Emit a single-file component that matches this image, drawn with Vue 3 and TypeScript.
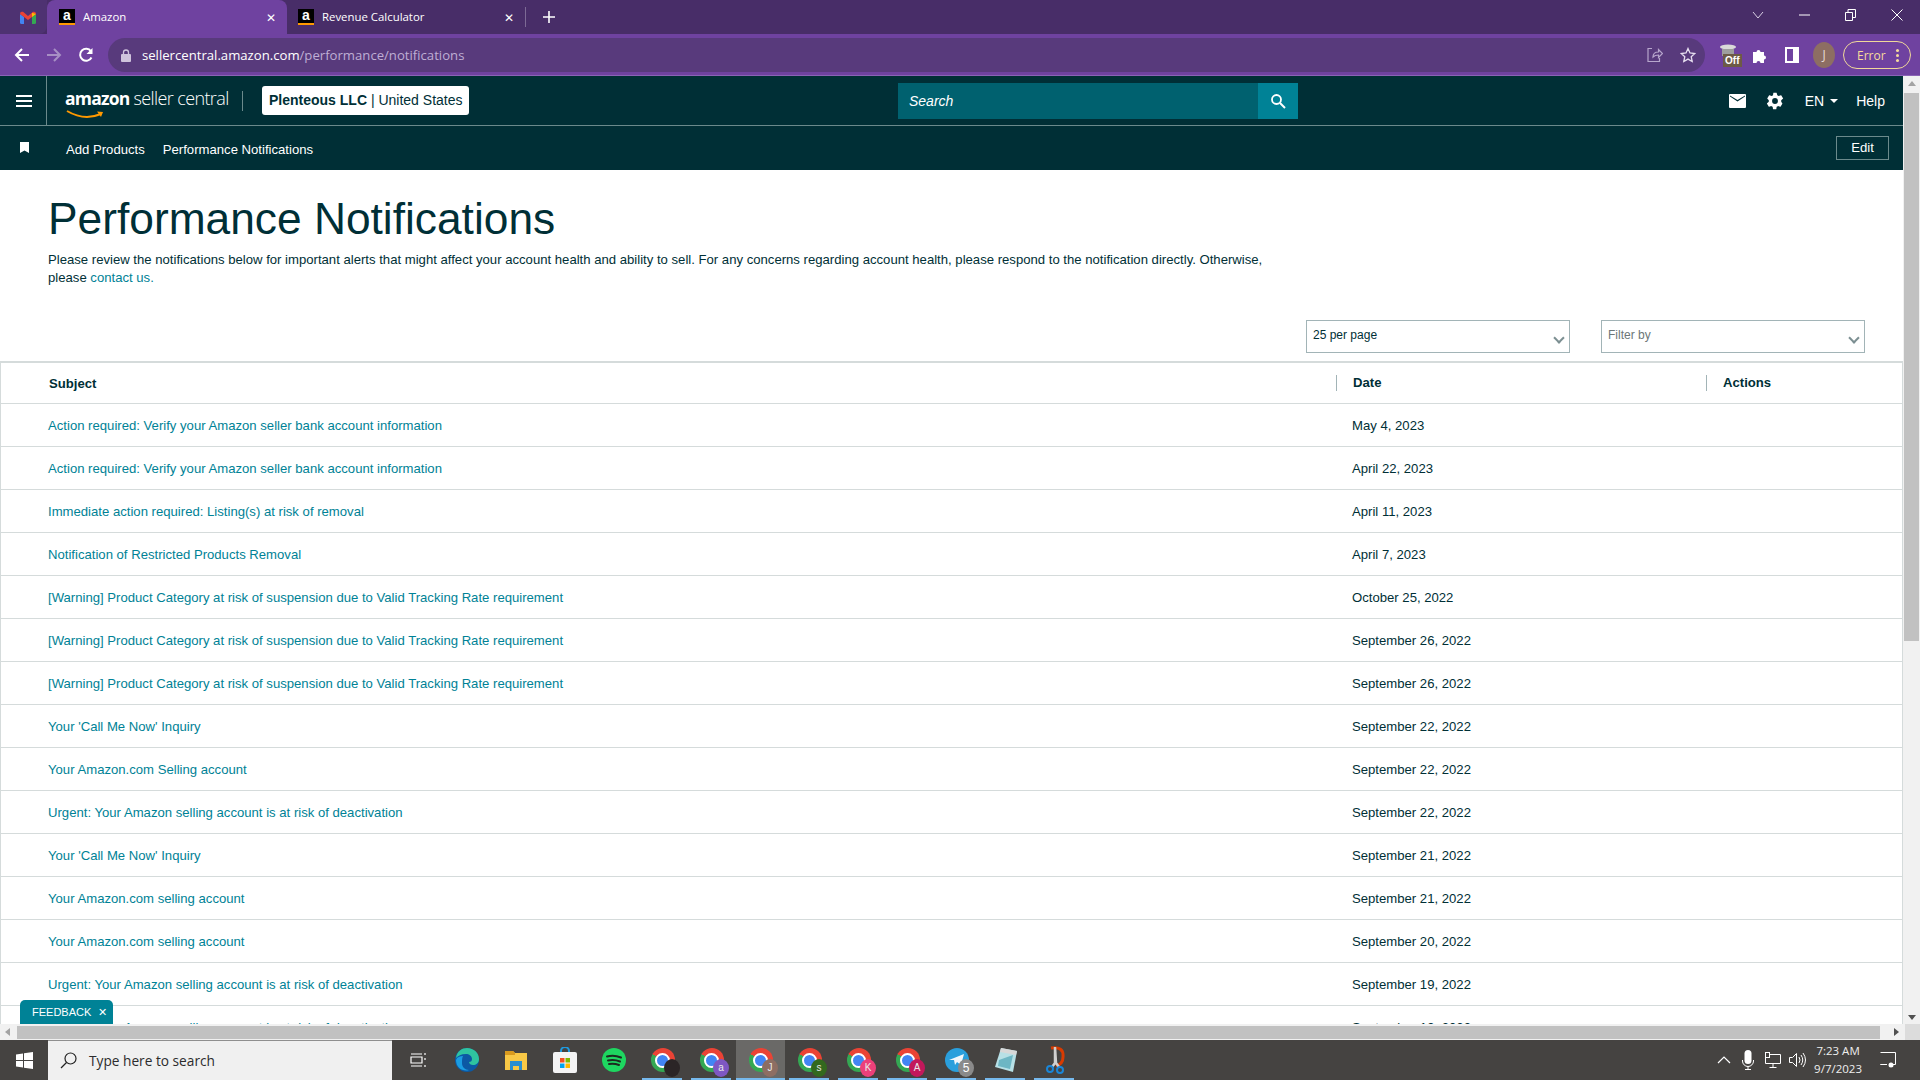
<script setup lang="ts">
interface Row {
  subject: string
  date: string
}

const rows: Row[] = [
  { subject: "Action required: Verify your Amazon seller bank account information", date: "May 4, 2023" },
  { subject: "Action required: Verify your Amazon seller bank account information", date: "April 22, 2023" },
  { subject: "Immediate action required: Listing(s) at risk of removal", date: "April 11, 2023" },
  { subject: "Notification of Restricted Products Removal", date: "April 7, 2023" },
  { subject: "[Warning] Product Category at risk of suspension due to Valid Tracking Rate requirement", date: "October 25, 2022" },
  { subject: "[Warning] Product Category at risk of suspension due to Valid Tracking Rate requirement", date: "September 26, 2022" },
  { subject: "[Warning] Product Category at risk of suspension due to Valid Tracking Rate requirement", date: "September 26, 2022" },
  { subject: "Your 'Call Me Now' Inquiry", date: "September 22, 2022" },
  { subject: "Your Amazon.com Selling account", date: "September 22, 2022" },
  { subject: "Urgent: Your Amazon selling account is at risk of deactivation", date: "September 22, 2022" },
  { subject: "Your 'Call Me Now' Inquiry", date: "September 21, 2022" },
  { subject: "Your Amazon.com selling account", date: "September 21, 2022" },
  { subject: "Your Amazon.com selling account", date: "September 20, 2022" },
  { subject: "Urgent: Your Amazon selling account is at risk of deactivation", date: "September 19, 2022" },
  { subject: "Urgent: Your Amazon selling account is at risk of deactivation", date: "September 19, 2022" },
]

const chromes = [
  { letter: "", color: "#2b2526", active: false },
  { letter: "a", color: "#7e57c2", active: false },
  { letter: "J", color: "#8d6e63", active: true },
  { letter: "s", color: "#33691e", active: false },
  { letter: "K", color: "#ec407a", active: false },
  { letter: "A", color: "#c2185b", active: false },
]
</script>

<template>
  <div class="screen">
    <div class="tabstrip">
      <div class="gmail-tab">
        <svg width="16" height="13" viewBox="0 0 16 13">
          <path d="M0 3v8.500q0 1.500 1.500 1.500H4V6z" fill="#4285f4" />
          <path d="M16 3v8.500q0 1.500-1.500 1.500H12V6z" fill="#34a853" />
          <path d="M0 3q0-3 3-2.200L8 5l5-4.200q3-.8 3 2.200l-4 3-4 3-4-3z" fill="#ea4335" />
          <path d="M12 1.800 16 3l-4 3z" fill="#fbbc04" />
        </svg>
      </div>
      <div class="tab active">
        <span class="favicon">a</span>
        <span class="tab-title">Amazon</span>
        <span class="tab-close">✕</span>
      </div>
      <div class="tab">
        <span class="favicon">a</span>
        <span class="tab-title">Revenue Calculator</span>
        <span class="tab-close">✕</span>
      </div>
      <div class="tab-sep"></div>
      <svg class="new-tab" width="12" height="12" viewBox="0 0 12 12">
        <path d="M6 0v12M0 6h12" stroke="#fff" stroke-width="1.600" />
      </svg>
      <div class="win-controls">
        <svg width="12" height="8" viewBox="0 0 12 8"><path d="M1 1l5 6 5-6" fill="none" stroke="#d8d0e4" /></svg>
        <svg width="11" height="2" viewBox="0 0 11 2"><path d="M0 1h11" stroke="#fff" /></svg>
        <svg width="11" height="12" viewBox="0 0 11 12"><path d="M.5 3.500h7v8h-7zM3 3.500V.500h7.500v8H7.500" fill="none" stroke="#fff" /></svg>
        <svg width="12" height="12" viewBox="0 0 12 12"><path d="M.5.500l11 11M11.500.500l-11 11" stroke="#fff" /></svg>
      </div>
    </div>

    <div class="toolbar">
      <svg class="nav-ic" width="16" height="16" viewBox="0 0 16 16"><path d="M15 8H2M8 2 2 8l6 6" fill="none" stroke="#fff" stroke-width="2" /></svg>
      <svg class="nav-ic" width="16" height="16" viewBox="0 0 16 16"><path d="M1 8h13M8 2l6 6-6 6" fill="none" stroke="#a78fc4" stroke-width="2" /></svg>
      <svg class="nav-ic" width="16" height="16" viewBox="0 0 16 16"><path d="M13.500 10.500A6 6 0 1 1 13 4.300" fill="none" stroke="#fff" stroke-width="2" /><path d="M14.500 1v6h-6z" fill="#fff" /></svg>
      <div class="omnibox">
        <svg width="10" height="13" viewBox="0 0 10 13"><path d="M2.500 5V3.500a2.500 2.500 0 0 1 5 0V5" fill="none" stroke="#cfc3dc" stroke-width="1.300" /><rect y="5" width="10" height="8" rx="1" fill="#cfc3dc" /></svg>
        <span class="url"><b>sellercentral.amazon.com</b>/performance/notifications</span>
        <svg class="omni-share" width="16" height="16" viewBox="0 0 16 16"><path d="M5 1.500H1v13h11.500V11M6 10q0-5 5.500-5V2.500L15.500 6.500l-4 4V8Q8 8 6 10z" fill="none" stroke="#b7a6cc" stroke-width="1.200" /></svg>
        <svg width="16" height="16" viewBox="0 0 16 16"><path d="M8 1.500l2 4.500 4.800.5-3.600 3.200 1 4.800L8 12.100l-4.200 2.400 1-4.800L1.200 6.500 6 6z" fill="none" stroke="#e6deef" stroke-width="1.300" /></svg>
      </div>
      <div class="ext">
        <svg width="18" height="14" viewBox="0 0 18 14"><ellipse cx="9" cy="3" rx="8" ry="2.500" fill="#d9d9d9" /><path d="M3 5v7h12V5z" fill="#9e9e9e" /></svg>
        <span class="ext-off">Off</span>
      </div>
      <svg class="tool-ic puzzle" width="16" height="16" viewBox="0 0 16 16"><path d="M1 5h3.500a2 2 0 1 1 4 0H12v3.500a2 2 0 1 1 0 4V16H8.500a2 2 0 1 0-4 0H1z" fill="#fff" /></svg>
      <svg class="tool-ic panel" width="14" height="16" viewBox="0 0 14 16"><path d="M0 0h14v16H0zM2 2v12h6V2z" fill="#fff" fill-rule="evenodd" /></svg>
      <span class="avatar">J</span>
      <div class="error-pill"><span>Error</span><i class="dots"></i></div>
    </div>

    <div class="body">
      <div class="page">
        <header class="sc-top">
          <div class="burger">
            <svg width="16" height="12" viewBox="0 0 16 12"><path d="M0 1h16M0 6h16M0 11h16" stroke="#fff" stroke-width="2" /></svg>
          </div>
          <div class="logo">
            <span class="logo-amazon">amazon</span>
            <span class="logo-seller">seller central</span>
            <svg class="logo-smile" width="42" height="10" viewBox="0 0 42 10"><path d="M1 1q17 10 34 3" fill="none" stroke="#f90" stroke-width="2" /><path d="M31 1.500l6 .5-2 5z" fill="#f90" /></svg>
          </div>
          <div class="logo-sep"></div>
          <div class="account"><b>Plenteous LLC</b> | United States</div>
          <div class="search">
            <span class="search-input">Search</span>
            <span class="search-btn">
              <svg width="16" height="16" viewBox="0 0 16 16"><circle cx="6.500" cy="6.500" r="4.500" fill="none" stroke="#fff" stroke-width="1.800" /><path d="M10 10l5 5" stroke="#fff" stroke-width="2" /></svg>
            </span>
          </div>
          <div class="top-right">
            <svg width="17" height="14" viewBox="0 0 17 14"><path d="M1 0h15a1 1 0 0 1 1 1v12a1 1 0 0 1-1 1H1a1 1 0 0 1-1-1V1a1 1 0 0 1 1-1zm0 2.500 7.500 5 7.500-5v-1L8.500 6 1 1.500z" fill="#fff" fill-rule="evenodd" /></svg>
            <svg class="gear" width="20" height="20" viewBox="0 0 24 24"><path d="M19.400 13c.1-.3.100-.7.100-1s0-.7-.1-1l2.100-1.600c.2-.2.200-.4.100-.6l-2-3.500c-.1-.2-.4-.3-.6-.2l-2.500 1c-.5-.4-1.100-.7-1.700-1L14 2.400c0-.2-.2-.4-.5-.4h-3c-.3 0-.5.200-.5.400l-.4 2.700c-.6.300-1.200.6-1.700 1l-2.500-1c-.2-.1-.5 0-.6.200l-2 3.500c-.1.200-.1.400.1.600L4.600 11c-.1.300-.1.700-.1 1s0 .7.100 1l-2.100 1.600c-.2.200-.2.400-.1.600l2 3.500c.1.200.4.300.6.200l2.500-1c.5.400 1.100.7 1.700 1l.4 2.700c0 .2.200.4.500.4h3c.3 0 .5-.2.500-.4l.4-2.700c.6-.3 1.200-.6 1.700-1l2.500 1c.2.100.5 0 .6-.2l2-3.500c.1-.2.100-.4-.1-.6zM12 15.500a3.500 3.500 0 1 1 0-7 3.500 3.500 0 0 1 0 7z" fill="#fff" /></svg>
            <span class="lang">EN<i class="lang-caret"></i></span>
            <span class="help">Help</span>
          </div>
        </header>

        <nav class="sc-nav">
          <svg class="bookmark" width="9" height="11" viewBox="0 0 9 11"><path d="M0 0h9v11L4.500 8.500 0 11z" fill="#fff" /></svg>
          <span class="nav-link first">Add Products</span>
          <span class="nav-link">Performance Notifications</span>
          <span class="edit">Edit</span>
        </nav>

        <main class="content">
          <h1>Performance Notifications</h1>
          <p class="intro">
            Please review the notifications below for important alerts that might affect your account health and ability to sell. For any concerns regarding account health, please respond to the notification directly. Otherwise, please <a>contact us.</a>
          </p>
          <div class="filters">
            <div class="select"><span>25 per page</span><i class="chev"></i></div>
            <div class="select placeholder"><span>Filter by</span><i class="chev"></i></div>
          </div>
          <div class="table">
            <div class="tr th">
              <div class="c1">Subject</div>
              <div class="c2">Date</div>
              <div class="c3">Actions</div>
            </div>
            <div v-for="(r, i) in rows" :key="i" class="tr">
              <div class="c1"><a>{{ r.subject }}</a></div>
              <div class="c2">{{ r.date }}</div>
              <div class="c3"></div>
            </div>
          </div>
          <div class="feedback">FEEDBACK<span>✕</span></div>
        </main>
      </div>

      <div class="vscroll">
        <i class="arrow up"></i>
        <div class="vthumb"></div>
        <i class="arrow down"></i>
      </div>
    </div>

    <div class="hscroll">
      <i class="arrow left"></i>
      <div class="hthumb"></div>
      <i class="arrow right"></i>
      <div class="corner"></div>
    </div>

    <footer class="taskbar">
      <div class="start">
        <svg width="17" height="17" viewBox="0 0 17 17"><path d="M0 2.400 7 1.400V8H0zM8 1.200 17 0v8H8zM0 9h7v6.600l-7-1zM8 9h9v8l-9-1.200z" fill="#fff" /></svg>
      </div>
      <div class="tb-search">
        <svg width="17" height="17" viewBox="0 0 17 17"><circle cx="10.500" cy="6.500" r="5.500" fill="none" stroke="#222" stroke-width="1.200" /><path d="M6.500 10.500 1 16" stroke="#222" stroke-width="1.300" /></svg>
        <span>Type here to search</span>
      </div>
      <div class="tb-apps">
        <div class="tb-app">
          <svg width="16" height="16" viewBox="0 0 16 16"><path d="M1 2h11M1 14h11M1 5h11v6H1zM15 1v2M15 6v2M15 13v2" fill="none" stroke="#fff" stroke-width="1.200" /></svg>
        </div>
        <div class="tb-app">
          <svg width="24" height="24" viewBox="0 0 24 24">
            <circle cx="12" cy="12" r="12" fill="#0c59a4" />
            <path d="M1 10C2 3 7 0 12 0c7 0 12 5 12 11 0 4-3 6-6 6-2 0-4-1-4-3 2 0 3-1 3-3 0-3-3-5-6-5-5 0-8 2-10 4z" fill="#2fc4a0" />
            <path d="M7 15c0 4 3 7 7 7-6 2-13-2-13-10 1-3 4-4 7-4-1 2-1 4-1 7z" fill="#1b9de2" />
          </svg>
        </div>
        <div class="tb-app">
          <svg width="22" height="20" viewBox="0 0 22 20">
            <path d="M0 1h8l2 2h12v17H0z" fill="#f8c846" />
            <path d="M0 1h8l2 2v2H0z" fill="#d99a1e" />
            <path d="M5 11h12v9h-3v-4H8v4H5z" fill="#2a8ed0" />
          </svg>
        </div>
        <div class="tb-app">
          <svg width="24" height="26" viewBox="0 0 24 26">
            <path d="M8 6V4a4 4 0 0 1 8 0v2" fill="none" stroke="#1e9be0" stroke-width="2" />
            <rect y="5" width="24" height="21" rx="2" fill="#f4f4f4" />
            <rect x="7" y="11" width="4.500" height="4.500" fill="#f25022" />
            <rect x="12.500" y="11" width="4.500" height="4.500" fill="#7fba00" />
            <rect x="7" y="16.500" width="4.500" height="4.500" fill="#00a4ef" />
            <rect x="12.500" y="16.500" width="4.500" height="4.500" fill="#ffb900" />
          </svg>
        </div>
        <div class="tb-app">
          <svg width="24" height="24" viewBox="0 0 24 24">
            <circle cx="12" cy="12" r="12" fill="#1ed760" />
            <path d="M5 8.500q7-2 14 1M6 12.500q6-1.500 12 1M7 16q5-1 10 1" fill="none" stroke="#1c2b20" stroke-width="2" stroke-linecap="round" />
          </svg>
        </div>
        <div v-for="c in chromes" :key="c.color" class="tb-app open" :class="{ focused: c.active }">
          <div class="chrome"><i></i></div>
          <span class="chrome-badge" :style="{ background: c.color }">{{ c.letter }}</span>
        </div>
        <div class="tb-app open">
          <svg width="24" height="24" viewBox="0 0 24 24">
            <circle cx="12" cy="12" r="12" fill="#2a9fdc" />
            <path d="M4 12 19 6l-3 11-4-3-2 3-1-5z" fill="#f2f7fb" />
          </svg>
          <span class="chrome-badge tg">5</span>
        </div>
        <div class="tb-app open">
          <svg width="24" height="26" viewBox="0 0 24 26">
            <path d="M7 1l16 3-4 21-18-5z" fill="#b7e0e6" />
            <path d="M7 1l16 3-1 4L6 5z" fill="#d8d8d8" />
            <path d="M5 13l14-5-3 14-12-3z" fill="#6db6c4" />
          </svg>
        </div>
        <div class="tb-app open">
          <svg width="20" height="28" viewBox="0 0 20 28">
            <path d="M6 2q13-2 12 9 0 7-7 9" fill="none" stroke="#d83b01" stroke-width="3" />
            <path d="M10 1v16l-3 4M10 1l1 16 3 4" fill="none" stroke="#d0d0d0" stroke-width="2.500" />
            <circle cx="5" cy="23" r="3" fill="none" stroke="#1a86d8" stroke-width="2" />
            <circle cx="15" cy="24" r="3" fill="none" stroke="#1a86d8" stroke-width="2" />
          </svg>
        </div>
      </div>
      <div class="tray">
        <svg width="14" height="8" viewBox="0 0 14 8"><path d="M1 7l6-6 6 6" fill="none" stroke="#fff" stroke-width="1.200" /></svg>
        <svg class="mic" width="12" height="20" viewBox="0 0 12 20"><rect x="2.500" width="7" height="14" rx="3.500" fill="#fff" /><path d="M.5 10v1a5.500 5.500 0 0 0 11 0v-1M6 16.500V19M3 19.500h6" fill="none" stroke="#fff" /></svg>
        <svg class="net" width="16" height="16" viewBox="0 0 16 16"><path d="M4 2.500h11.500v9H.5V6M8 11.500v3.500M4.500 15.500h7" fill="none" stroke="#fff" /><rect x=".5" y=".5" width="4" height="5" fill="#454341" stroke="#fff" /></svg>
        <svg width="17" height="16" viewBox="0 0 17 16"><path d="M.5 5.500h3l4-4v13l-4-4h-3zM10 5q2 3 0 6M12 3q3.500 5 0 10M14 1q5 7 0 14" fill="none" stroke="#fff" /></svg>
        <div class="clock"><span>7:23 AM</span><span>9/7/2023</span></div>
        <svg class="notif" width="16" height="16" viewBox="0 0 16 16"><path d="M.5.500h15v12h-4M7 12.500H.5z" fill="none" stroke="#fff" /><circle cx="11" cy="13" r="2.500" fill="#fff" /></svg>
      </div>
    </footer>
  </div>
</template>

<style>
html,
body {
  margin: 0;
  overflow: hidden;
}
</style>

<style scoped>
.screen {
  width: 1920px;
  height: 1080px;
  display: flex;
  flex-direction: column;
  overflow: hidden;
  font-family: "Liberation Sans", Arial, sans-serif;
  color: #002f36;
  background: #fff;
}

/* browser chrome */
.tabstrip {
  height: 34px;
  flex: none;
  display: flex;
  align-items: center;
  background: #482d68;
  color: #fff;
  font-family: "Open Sans", sans-serif;
  font-size: 11.400px;
}
.gmail-tab {
  width: 47px;
  height: 34px;
  box-sizing: border-box;
  display: flex;
  align-items: center;
  padding-left: 20px;
  background: #4e3272;
  border-bottom-right-radius: 8px;
}
.tab {
  width: 238px;
  height: 34px;
  box-sizing: border-box;
  display: flex;
  align-items: center;
  padding: 0 11px;
}
.tab.active {
  width: 240px;
  padding-left: 12px;
  background: #6f42a0;
  border-radius: 8px 8px 0 0;
}
.favicon {
  width: 16px;
  height: 16px;
  background: #000;
  color: #fff;
  font: bold 14px/13px "Liberation Sans", sans-serif;
  text-align: center;
  box-shadow: inset 0 -2px 0 #f90;
}
.tab-title {
  flex: 1;
  margin-left: 8px;
  margin-top: -1px;
}
.tab-close {
  font-size: 12px;
  margin-right: 0;
}
.tab-sep {
  width: 1px;
  height: 20px;
  background: #7d6a95;
}
.new-tab {
  margin-left: 17px;
}
.win-controls {
  margin-left: auto;
  width: 168px;
  display: flex;
  align-items: center;
  justify-content: space-between;
  padding-right: 17px;
  box-sizing: border-box;
  padding-bottom: 4px;
}

.toolbar {
  height: 42px;
  flex: none;
  box-sizing: border-box;
  display: flex;
  align-items: center;
  padding: 1px 9px 0 14px;
  background: #6f42a0;
  border-bottom: 1px solid #8b63b6;
}
.nav-ic {
  margin-right: 16px;
}
.omnibox {
  width: 1598px;
  height: 34px;
  margin-left: -2px;
  box-sizing: border-box;
  display: flex;
  align-items: center;
  padding: 0 9px 0 13px;
  background: #583a7c;
  border-radius: 17px;
}
.url {
  margin-left: 11px;
  flex: 1;
  font-family: "Open Sans", sans-serif;
  font-size: 13.150px;
  color: #bfaed4;
}
.url b {
  font-weight: 400;
  color: #fff;
}
.omni-share {
  margin-right: 17px;
}
.ext {
  position: relative;
  width: 20px;
  height: 22px;
  margin-left: 14px;
}
.ext-off {
  position: absolute;
  left: 4px;
  top: 10px;
  padding: 0 2px;
  background: #6d5a46;
  color: #fff;
  font: bold 10px/13px "Liberation Sans", sans-serif;
}
.tool-ic.puzzle {
  margin-left: 13px;
}
.tool-ic.panel {
  margin-left: 17px;
}
.avatar {
  width: 22px;
  height: 26px;
  margin-left: 14px;
  border-radius: 50%;
  background: #8d6e63;
  color: #e8dcd6;
  font: 12px/26px "Open Sans", sans-serif;
  text-align: center;
}
.error-pill {
  width: 68px;
  height: 28px;
  margin-left: 8px;
  box-sizing: border-box;
  display: flex;
  align-items: center;
  justify-content: space-between;
  padding: 0 11px 0 13px;
  border: 1px solid #f0d89a;
  border-radius: 14px;
  color: #f6dc9c;
  font: 12px "Open Sans", sans-serif;
}
.dots {
  width: 3px;
  height: 3px;
  border-radius: 50%;
  background: #f6dc9c;
  box-shadow: 0 -5px 0 #f6dc9c, 0 5px 0 #f6dc9c;
}

/* page */
.body {
  flex: none;
  height: 948px;
  display: flex;
}
.page {
  width: 1903px;
  height: 948px;
  overflow: hidden;
  display: flex;
  flex-direction: column;
}
.sc-top {
  height: 50px;
  flex: none;
  box-sizing: border-box;
  display: flex;
  align-items: center;
  background: #002f36;
  border-bottom: 1px solid #6b8a8c;
  color: #fff;
}
.burger {
  width: 47px;
  height: 49px;
  flex: none;
  box-sizing: border-box;
  display: flex;
  align-items: center;
  padding-left: 16px;
  border-right: 1px solid #6b8a8c;
}
.logo {
  position: relative;
  width: 177px;
  margin-left: 18px;
  display: flex;
  align-items: baseline;
  gap: 4px;
  margin-top: -6px;
  white-space: nowrap;
}
.logo-amazon {
  font: bold 17.500px "Open Sans", sans-serif;
  letter-spacing: -0.8px;
}
.logo-seller {
  font: 300 18px "Open Sans", sans-serif;
  letter-spacing: -0.6px;
}
.logo-smile {
  position: absolute;
  left: 1px;
  top: 24px;
}
.logo-sep {
  width: 1px;
  height: 20px;
  background: #6b8a8c;
}
.account {
  margin-left: 19px;
  width: 207px;
  height: 29px;
  flex: none;
  box-sizing: border-box;
  padding-left: 7px;
  background: #fff;
  border-radius: 3px;
  color: #002f36;
  font-size: 14px;
  line-height: 29px;
  white-space: nowrap;
}
.search {
  margin-left: 429px;
  width: 400px;
  height: 36px;
  flex: none;
  display: flex;
}
.search-input {
  flex: 1;
  padding-left: 11px;
  background: #00616f;
  font-style: italic;
  font-size: 14px;
  line-height: 36px;
}
.search-btn {
  width: 40px;
  display: flex;
  align-items: center;
  justify-content: center;
  background: #008296;
}
.top-right {
  margin-left: auto;
  padding-right: 18px;
  display: flex;
  align-items: center;
  font-size: 14px;
}
.gear {
  margin-left: 19px;
}
.lang {
  margin-left: 20px;
  display: flex;
  align-items: center;
}
.lang-caret {
  margin-left: 6px;
  border: 4px solid transparent;
  border-top: 4px solid #fff;
  border-bottom: 0;
}
.help {
  margin-left: 18px;
}
.sc-nav {
  height: 44px;
  flex: none;
  display: flex;
  align-items: center;
  padding: 2px 14px 0 20px;
  box-sizing: border-box;
  background: #002f36;
  color: #fff;
  font-size: 13.130px;
}
.bookmark {
  margin-top: -3px;
}
.nav-link {
  margin-left: 18px;
}
.nav-link.first {
  margin-left: 37px;
}
.edit {
  margin-left: auto;
  width: 53px;
  height: 24px;
  box-sizing: border-box;
  border: 1px solid #6b8a8c;
  line-height: 22px;
  text-align: center;
  margin-top: -2px;
}

.content {
  position: relative;
  flex: 1;
  min-height: 0;
  overflow: hidden;
}
h1 {
  margin: 22px 0 0 48px;
  font-size: 44.300px;
  font-weight: 400;
  line-height: 54px;
  color: #002f36;
}
.intro {
  width: 1240px;
  margin: 5px 0 0 48px;
  font-size: 13.130px;
  line-height: 18px;
  color: #002f36;
}
a {
  color: #008296;
}
.filters {
  display: flex;
  justify-content: flex-end;
  gap: 31px;
  margin-top: 33px;
  padding-right: 38px;
}
.select {
  width: 264px;
  height: 33px;
  box-sizing: border-box;
  display: flex;
  align-items: center;
  justify-content: space-between;
  padding: 0 6px 3px 6px;
  border: 1px solid #a2b4b7;
  font-size: 12px;
  color: #002f36;
}
.select.placeholder {
  color: #6c7778;
}
.chev {
  width: 6px;
  height: 6px;
  margin: 5px 0 0 0;
  border-right: 2px solid #7c8f92;
  border-bottom: 2px solid #7c8f92;
  transform: rotate(45deg);
}
.table {
  margin-top: 8px;
  border: 1px solid #d5dbdb;
  border-bottom: 0;
  border-top-width: 2px;
  font-size: 13.130px;
}
.tr {
  height: 43px;
  box-sizing: border-box;
  display: flex;
  align-items: center;
  border-bottom: 1px solid #d5dbdb;
}
.tr:last-child {
  border-bottom: 0;
}
.c1 {
  width: 1336px;
  flex: none;
  padding-left: 47px;
  box-sizing: border-box;
}
.c2 {
  width: 370px;
  flex: none;
  padding-left: 15px;
  box-sizing: border-box;
}
.c3 {
  flex: 1;
  padding-left: 16px;
}
.th {
  height: 41px;
  font-weight: 700;
}
.th .c1 {
  width: 1335px;
  padding-left: 48px;
}
.th .c2,
.th .c3 {
  height: 16px;
  padding-left: 16px;
  line-height: 16px;
  border-left: 1px solid #a2b4b7;
}
.feedback {
  position: absolute;
  left: 20px;
  bottom: 0;
  width: 93px;
  height: 24px;
  box-sizing: border-box;
  display: flex;
  justify-content: space-between;
  padding: 0 6px 0 12px;
  border-radius: 5px 5px 0 0;
  background: #008296;
  color: #fff;
  font-size: 11px;
  line-height: 25px;
  white-space: nowrap;
}

/* scrollbars */
.vscroll {
  width: 17px;
  height: 948px;
  flex: none;
  box-sizing: border-box;
  padding-top: 5px;
  display: flex;
  flex-direction: column;
  align-items: center;
  background: #f1f1f1;
}
.vthumb {
  width: 15px;
  height: 548px;
  margin-top: 7px;
  background: #c1c1c1;
}
.vscroll .down {
  margin-top: auto;
  margin-bottom: 4px;
}
.arrow {
  display: block;
  border: 4px solid transparent;
}
.arrow.up {
  border-top: 0;
  border-bottom: 5px solid #a3a3a3;
}
.arrow.down {
  border-bottom: 0;
  border-top: 5px solid #505050;
}
.arrow.left {
  border-left: 0;
  border-right: 5px solid #a3a3a3;
  margin: 0 7px 0 5px;
}
.arrow.right {
  border-right: 0;
  border-left: 5px solid #505050;
  margin: 0 6px 0 14px;
}
.hscroll {
  height: 16px;
  flex: none;
  box-sizing: border-box;
  display: flex;
  align-items: center;
  background: #f1f1f1;
}
.hthumb {
  width: 1863px;
  height: 13px;
  background: #c1c1c1;
}
.corner {
  flex: 1;
  align-self: stretch;
  background: #dcdcdc;
}

/* taskbar */
.taskbar {
  height: 40px;
  flex: none;
  display: flex;
  background: #454341;
  color: #fff;
}
.start {
  width: 48px;
  display: flex;
  align-items: center;
  justify-content: center;
}
.tb-search {
  width: 344px;
  box-sizing: border-box;
  display: flex;
  align-items: center;
  gap: 12px;
  padding-left: 12px;
  background: #f0f0f0;
  border-top: 1px solid #8f8f8f;
  color: #2c2c2c;
  font: 13.700px "Open Sans", sans-serif;
}
.tb-apps {
  display: flex;
  margin-left: 1px;
}
.tb-app {
  position: relative;
  width: 49px;
  height: 40px;
  display: flex;
  align-items: center;
  justify-content: center;
}
.tb-app.open::after {
  content: "";
  position: absolute;
  left: 4px;
  right: 5px;
  bottom: 0;
  height: 2px;
  background: #76b9ed;
}
.tb-app.focused {
  background: #6a6967;
}
.tb-app.focused::after {
  left: 0;
  right: 0;
}
.chrome {
  width: 24px;
  height: 24px;
  border-radius: 50%;
  display: flex;
  align-items: center;
  justify-content: center;
  background: conic-gradient(#ea4335 0 90deg, #fbbc04 90deg 150deg, #34a853 150deg 300deg, #ea4335 300deg);
}
.chrome i {
  width: 11px;
  height: 11px;
  border: 2px solid #fff;
  border-radius: 50%;
  background: #4285f4;
}
.chrome-badge {
  position: absolute;
  left: 26px;
  top: 19px;
  width: 16px;
  height: 18px;
  border-radius: 50%;
  color: #e8e8e8;
  font-size: 10px;
  line-height: 18px;
  text-align: center;
}
.chrome-badge.tg {
  background: #8a8a8a;
  color: #fff;
  font-size: 12px;
}
.tray {
  margin-left: auto;
  display: flex;
  align-items: center;
  padding-right: 24px;
  gap: 8px;
}
.mic,
.net {
  margin-left: 3px;
}
.clock {
  display: flex;
  flex-direction: column;
  align-items: center;
  font: 11.500px/18px "Open Sans", sans-serif;
  color: #eee;
}
.notif {
  margin-left: 10px;
}
</style>
